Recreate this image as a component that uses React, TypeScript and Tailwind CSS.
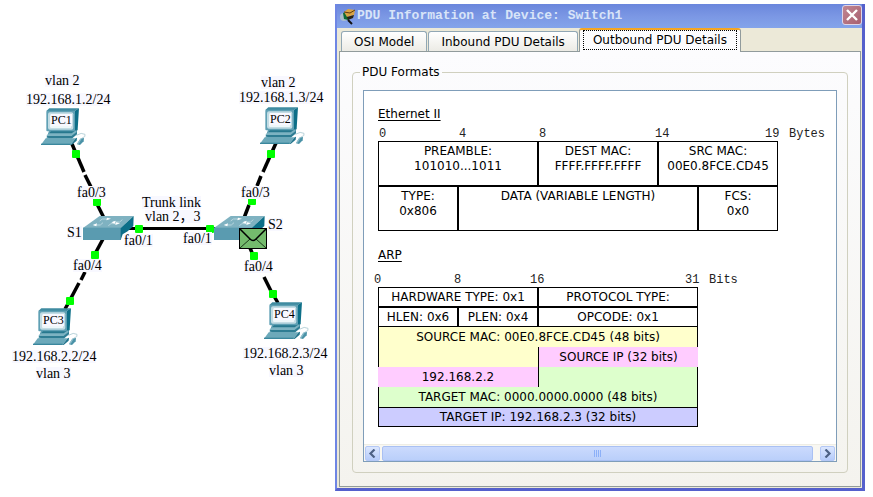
import React, { useState } from 'react';

interface Point {
  x: number;
  y: number;
}

interface CanvasLabel extends Point {
  text: string;
}

const pcs: CanvasLabel[] = [
  { text: 'PC1', x: 41, y: 108 },
  { text: 'PC2', x: 260, y: 107 },
  { text: 'PC3', x: 33, y: 308 },
  { text: 'PC4', x: 264, y: 302 },
];

const switches: Point[] = [
  { x: 83, y: 216 },
  { x: 214, y: 216 },
];

const labels: CanvasLabel[] = [
  { text: 'vlan 2', x: 45, y: 74 },
  { text: '192.168.1.2/24', x: 26, y: 93 },
  { text: 'vlan 2', x: 261, y: 76 },
  { text: '192.168.1.3/24', x: 239, y: 91 },
  { text: 'fa0/3', x: 77, y: 186 },
  { text: 'fa0/3', x: 241, y: 186 },
  { text: 'Trunk link', x: 142, y: 196 },
  { text: 'vlan 2，3', x: 145, y: 210 },
  { text: 'S1', x: 67, y: 226 },
  { text: 'S2', x: 268, y: 218 },
  { text: 'fa0/1', x: 124, y: 234 },
  { text: 'fa0/1', x: 183, y: 232 },
  { text: 'fa0/4', x: 73, y: 259 },
  { text: 'fa0/4', x: 244, y: 260 },
  { text: '192.168.2.2/24', x: 12, y: 350 },
  { text: 'vlan 3', x: 36, y: 367 },
  { text: '192.168.2.3/24', x: 243, y: 347 },
  { text: 'vlan 3', x: 269, y: 364 },
];

// dashes of the copper cables, [x1, y1, x2, y2]
const dashes = [
  [72, 144, 84, 172],
  [85, 175, 91, 187],
  [97, 204, 104, 218],
  [276, 143, 263, 172],
  [261, 176, 257, 186],
  [249, 205, 244, 218],
  [103, 239, 96, 252],
  [85, 272, 81, 280],
  [79, 283, 71, 298],
  [69, 302, 65, 309],
  [250, 248, 253, 255],
  [264, 277, 271, 291],
  [274, 296, 278, 303],
];

const ports: Point[] = [
  { x: 76, y: 154 },
  { x: 97, y: 202 },
  { x: 139, y: 229 },
  { x: 95, y: 255 },
  { x: 70, y: 301 },
  { x: 210, y: 229 },
  { x: 252, y: 201 },
  { x: 254, y: 256 },
  { x: 273, y: 294 },
  { x: 271, y: 154 },
];

const PcIcon: React.FC<Point> = ({ x, y }) => (
  <svg x={x} y={y} width="46" height="38" viewBox="0 0 138 114">
    <polygon points="24,68 100,68 108,60 108,78 92,92 16,92" fill="#5a9db0" />
    <polygon points="16,9 25,1 114,1 101,9" fill="#3f8ba1" />
    <polygon points="101,9 114,1 110,66 99,76" fill="#0d6f88" />
    <rect x="16" y="8" width="86" height="62" rx="3" fill="#5fa0b4" />
    <rect x="21" y="13" width="76" height="52" rx="6" fill="#c3dce4" />
    <rect x="27" y="19" width="64" height="41" rx="4" fill="#eef7fa" />
    <polygon points="30,70 99,70 108,64 108,68 93,81 20,81" fill="#27788e" />
    <polygon points="24,76 92,76 106,66 106,72 92,84 16,84" fill="#7db3c2" />
    <polygon points="16,84 92,84 108,72 108,79 93,91 24,91" fill="#2f7d93" />
    <polygon points="14,91 104,91 89,110 0,110" fill="#6ca9ba" />
    <polygon points="0,107 89,107 89,111 0,111" fill="#3a879d" />
    <polygon points="104,91 108,89 107,98 92,111 89,110" fill="#21748c" />
    <path d="M106 82 Q122 72 132 79 Q136 86 122 91" fill="none" stroke="#b9d3da" strokeWidth="3" />
    <polygon points="118,92 129,90 128,100 117,111 108,109" fill="#4a92a7" />
    <polygon points="118,92 123,91 113,107 108,107" fill="#8fbecb" />
  </svg>
);

const SwitchIcon: React.FC<Point> = ({ x, y }) => (
  <svg x={x} y={y} width="51" height="24" viewBox="0 0 153 72">
    <polygon points="50,0 152,0 113,36 0,36" fill="#7fb2c1" />
    <rect x="0" y="35" width="114" height="37" fill="#5a9bb0" />
    <polygon points="113,36 152,0 151,30 134,46 119,55 113,72" fill="#0c6f88" />
    <g fill="none" stroke="#b7d5de" strokeWidth="3">
      <path d="M50 15 L58 9 H76" />
      <path d="M90 18 H110 L118 11" />
      <path d="M34 27 H52 L60 20" />
      <path d="M76 29 L84 23 H104" />
    </g>
    <g fill="#fff">
      <polygon points="72,5 84,8 70,13" />
      <polygon points="98,14 85,19 95,23" />
      <polygon points="42,22 29,27 40,31" />
      <polygon points="99,19 111,22 97,27" />
    </g>
  </svg>
);

const Topology: React.FC = () => (
  <section aria-label="Network topology" className="relative w-[335px] shrink-0 font-['Liberation_Serif','Noto_Sans_CJK_SC',serif] text-[14px] leading-[13px]">
    <svg width="335" height="400" className="block" aria-hidden="true">
      <line x1="124" y1="228.5" x2="218" y2="228.5" stroke="#000" strokeWidth="3" />
      {dashes.map(([x1, y1, x2, y2]) => (
        <line key={`${x1}-${y1}`} x1={x1} y1={y1} x2={x2} y2={y2} stroke="#000" strokeWidth="3.5" />
      ))}
      {switches.map((s) => (
        <SwitchIcon key={s.x} {...s} />
      ))}
      {pcs.map((pc) => (
        <PcIcon key={pc.text} x={pc.x} y={pc.y} />
      ))}
      {ports.map((p) => (
        <rect key={`${p.x}-${p.y}`} x={p.x - 4} y={p.y - 4} width="8" height="8" rx="1" fill="#00ff00" />
      ))}
      <rect x="239.5" y="228.5" width="27" height="20" fill="#74bb6d" stroke="#000" />
      <path d="M240 248 L250 239 M266 248 L256 239" stroke="#1c3a1a" fill="none" />
      <path d="M240 229 L250 239 Q253 242 256 239 L266 229" stroke="#000" strokeWidth="1.5" fill="none" />
    </svg>
    {labels.map((label) => (
      <span
        key={`${label.x}-${label.y}`}
        className="absolute whitespace-nowrap bg-[#f8f8ff]"
        style={{ left: label.x, top: label.y }}
      >
        {label.text}
      </span>
    ))}
    {pcs.map((pc) => (
      <span
        key={pc.text}
        className="absolute bg-[#f8f8ff] text-[12px] leading-[12px]"
        style={{ left: pc.x + 10, top: pc.y + 6 }}
      >
        {pc.text}
      </span>
    ))}
  </section>
);

const Ruler: React.FC<{ children: React.ReactNode }> = ({ children }) => (
  <div className="flex font-['Liberation_Mono',monospace] text-[12px] leading-[14px] text-[#222]">{children}</div>
);

const cell = 'border border-black p-0 text-center align-top font-normal';

const EthernetFrame: React.FC = () => (
  <table className="w-[400px] table-fixed border-separate border-spacing-0 leading-[15px]">
    <colgroup>
      <col className="w-[80px]" />
      <col className="w-[80px]" />
      <col className="w-[120px]" />
      <col className="w-[40px]" />
      <col className="w-[80px]" />
    </colgroup>
    <tbody>
      <tr className="h-[45px]">
        <td colSpan={2} className={`${cell} pt-[2px]`}>PREAMBLE:<br />101010...1011</td>
        <td className={`${cell} pt-[2px]`}>DEST MAC:<br />FFFF.FFFF.FFFF</td>
        <td colSpan={2} className={`${cell} pt-[2px]`}>SRC MAC:<br />00E0.8FCE.CD45</td>
      </tr>
      <tr className="h-[45px]">
        <td className={`${cell} pt-[2px]`}>TYPE:<br />0x806</td>
        <td colSpan={3} className={`${cell} pt-[2px]`}>DATA (VARIABLE LENGTH)</td>
        <td className={`${cell} pt-[2px]`}>FCS:<br />0x0</td>
      </tr>
    </tbody>
  </table>
);

const ArpPacket: React.FC = () => (
  <table className="w-[320px] table-fixed border-separate border-spacing-0 text-center leading-[18px]">
    <colgroup>
      <col className="w-[80px]" />
      <col className="w-[80px]" />
      <col className="w-[160px]" />
    </colgroup>
    <tbody>
      <tr className="h-[20px]">
        <td colSpan={2} className={cell}>HARDWARE TYPE: 0x1</td>
        <td className={cell}>PROTOCOL TYPE:</td>
      </tr>
      <tr className="h-[20px]">
        <td className={cell}>HLEN: 0x6</td>
        <td className={cell}>PLEN: 0x4</td>
        <td className={cell}>OPCODE: 0x1</td>
      </tr>
      <tr className="h-[20px]">
        <td colSpan={3} className="border-x border-black bg-[#ffffcc] p-0">SOURCE MAC: 00E0.8FCE.CD45 (48 bits)</td>
      </tr>
      <tr className="h-[20px]">
        <td colSpan={2} className="border-l border-black bg-[#ffffcc] p-0" />
        <td className="border-l border-black bg-[#ffccff] p-0">SOURCE IP (32 bits)</td>
      </tr>
      <tr className="h-[20px]">
        <td colSpan={2} className="bg-[#ffccff] p-0">192.168.2.2</td>
        <td className="border-x border-black bg-[#ddffcc] p-0" />
      </tr>
      <tr className="h-[20px]">
        <td colSpan={3} className="border-x border-black bg-[#ddffcc] p-0">TARGET MAC: 0000.0000.0000 (48 bits)</td>
      </tr>
      <tr className="h-[20px]">
        <td colSpan={3} className="border border-black bg-[#ccccff] p-0">TARGET IP: 192.168.2.3 (32 bits)</td>
      </tr>
    </tbody>
  </table>
);

const scrollButton =
  'flex h-[15px] w-[15px] shrink-0 items-center justify-center rounded-[2px] border border-[#b4c8f6] bg-linear-to-b from-[#dce7fe] to-[#b5cbfa]';

const ScrollBar: React.FC = () => (
  <div className="flex h-[17px] items-center border-t border-[#eeede5] bg-[#f8f7f2] px-px">
    <button type="button" aria-label="Scroll left" className={scrollButton}>
      <svg width="9" height="9" viewBox="0 0 9 9">
        <path d="M6.5 0.5 L2.5 4.5 L6.5 8.5" fill="none" stroke="#4d6185" strokeWidth="2.2" />
      </svg>
    </button>
    <div className="mr-[7px] ml-[2px] flex h-[15px] flex-1 items-center justify-center gap-px rounded-[2px] border border-[#a9c0f3] bg-linear-to-b from-[#cbdafd] to-[#bacffa]">
      <span className="h-[7px] w-px bg-[#8cb0f8]" />
      <span className="h-[7px] w-px bg-[#8cb0f8]" />
      <span className="h-[7px] w-px bg-[#8cb0f8]" />
      <span className="h-[7px] w-px bg-[#8cb0f8]" />
    </div>
    <button type="button" aria-label="Scroll right" className={scrollButton}>
      <svg width="9" height="9" viewBox="0 0 9 9">
        <path d="M2.5 0.5 L6.5 4.5 L2.5 8.5" fill="none" stroke="#4d6185" strokeWidth="2.2" />
      </svg>
    </button>
  </div>
);

const tabs = ['OSI Model', 'Inbound PDU Details', 'Outbound PDU Details'];

const PduWindow: React.FC = () => {
  const [active, setActive] = useState('Outbound PDU Details');

  return (
    <section className="mt-1 mr-2 min-w-[530px] flex-1 self-start border-r-3 border-b-3 border-l-2 border-[#6f86e4] border-r-[#5560cc] border-b-[#5560cc] bg-[#ece9d8]">
      <header className="flex h-[24px] items-center bg-linear-to-b from-[#6a86dc] via-[#7b97e4] to-[#84a4ea] pl-[3px]">
        <svg width="17" height="17" viewBox="0 0 17 17" aria-hidden="true">
          <circle cx="4" cy="9" r="4" fill="#a9bccd" />
          <polygon points="3,5 8,3 8,12 4,11" fill="#0d6a34" />
          <polygon points="4,4 8,1 15,2 14,7 7,9" fill="#d9a443" />
          <path d="M4 4 L10 5 L15 2" stroke="#5c3b10" fill="none" />
          <polygon points="7,9 14,7 13,10 8,12" fill="#2a2412" />
          <path d="M8 12 L12 16" stroke="#111" strokeWidth="2" />
        </svg>
        <h1 className="flex-1 font-['Liberation_Mono',monospace] text-[13px] leading-[16px] font-bold whitespace-nowrap text-[#d8e4f8]">
          PDU Information at Device: Switch1
        </h1>
        <button
          type="button"
          aria-label="Close"
          className="mb-[3px] flex h-[20px] w-[20px] items-center justify-center rounded-[3px] border border-[#dfd5e6] bg-linear-to-br from-[#c08792] to-[#a85f70]"
        >
          <svg width="12" height="12" viewBox="0 0 12 12">
            <path d="M1 1 L11 11 M11 1 L1 11" stroke="#fff" strokeWidth="2.4" />
          </svg>
        </button>
      </header>

      <div className="pr-px pb-px pl-[2px]">
        <div role="tablist" className="flex items-end pl-[2px]">
          {tabs.map((tab) =>
            tab === active ? (
              <button
                key={tab}
                type="button"
                role="tab"
                aria-selected="true"
                className="relative -mb-px h-[24px] rounded-t-[3px] border-x border-t-2 border-[#919b9c] border-t-[#f5a623] bg-[#fcfcfe] px-[3px] pb-[2px] leading-[18px]"
              >
                <span className="block border border-dotted border-black px-[9px]">{tab}</span>
              </button>
            ) : (
              <button
                key={tab}
                type="button"
                role="tab"
                aria-selected="false"
                onClick={() => setActive(tab)}
                className="mr-px h-[20px] rounded-t-[3px] border border-b-0 border-[#91a7b4] bg-linear-to-b from-white to-[#ecebe5] px-[12px] leading-[18px]"
              >
                {tab}
              </button>
            ),
          )}
        </div>

        <div className="border border-[#919b9c] bg-linear-to-b from-[#fcfcfe] to-[#f4f3ee] px-[12px] pt-[12px] pb-[13px]">
          <fieldset className="min-w-0 rounded-[4px] border border-[#d0d0bf] px-[10px] pb-[10px]">
            <legend className="-ml-[3px] px-[2px] leading-[16px]">PDU Formats</legend>
            <div className="mt-[10px] border border-[#7f9db9] bg-white">
              <div className="h-[353px] overflow-hidden pt-[15px] pl-[14px]">
                <h2 className="leading-[16px] underline underline-offset-2">Ethernet II</h2>
                <div className="pt-[5px] pl-px">
                  <Ruler>
                    <span className="w-[80px]">0</span>
                    <span className="w-[80px]">4</span>
                    <span className="w-[116px]">8</span>
                    <span className="w-[110px]">14</span>
                    <span className="w-[24px]">19</span>
                    <span>Bytes</span>
                  </Ruler>
                </div>
                <EthernetFrame />
                <h2 className="mt-[16px] leading-[16px] underline underline-offset-2">ARP</h2>
                <div className="-ml-[4px] pt-[10px]">
                  <Ruler>
                    <span className="w-[80px]">0</span>
                    <span className="w-[76px]">8</span>
                    <span className="w-[155px]">16</span>
                    <span className="w-[24px]">31</span>
                    <span>Bits</span>
                  </Ruler>
                </div>
                <ArpPacket />
              </div>
              <ScrollBar />
            </div>
          </fieldset>
        </div>
      </div>
    </section>
  );
};

const App: React.FC = () => (
  <main className="flex min-h-screen bg-white font-['DejaVu_Sans',sans-serif] text-[12px] text-black">
    <Topology />
    <PduWindow />
  </main>
);

export default App;
